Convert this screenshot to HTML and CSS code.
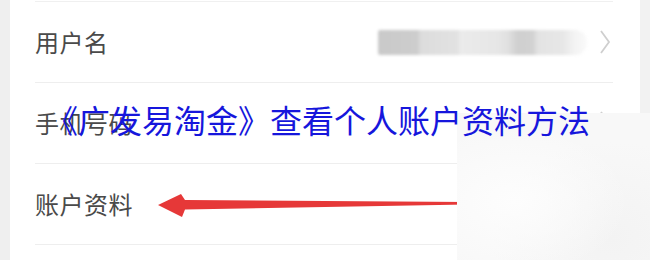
FILE: index.html
```html
<!DOCTYPE html>
<html lang="zh-CN">
<head>
<meta charset="utf-8">
<link rel="stylesheet" href="styles.css">
</head>
<body>
<div class="screen">
  <div class="edge edge-left"></div>
  <div class="main">
    <ul class="list">
      <li class="row">
        <span class="label">用户名</span>
        <span class="value masked"></span>
        <svg class="chev" viewBox="0 0 12 26" width="12" height="26"><polyline points="2,2 10,13 2,24" fill="none" stroke="#cfcfcf" stroke-width="1.8"/></svg>
      </li>
      <li class="row">
        <span class="label">手机号码</span>
        <span class="value"></span>
        <svg class="chev" viewBox="0 0 12 26" width="12" height="26"><polyline points="2,2 10,13 2,24" fill="none" stroke="#cfcfcf" stroke-width="1.8"/></svg>
      </li>
      <li class="row">
        <span class="label">账户资料</span>
      </li>
    </ul>
  </div>
  <div class="edge edge-right"></div>

  <svg class="arrow" viewBox="0 0 320 40" width="320" height="40">
    <polygon points="8,20 31,9 35,15 317,17 317,19.5 35,24.5 32,32" fill="#e63838"/>
  </svg>
  <div class="patch"></div>
  <h1 class="title">《广发易淘金》查看个人账户资料方法</h1>
</div>
</body>
</html>
```

FILE: styles.css
```css
* { box-sizing: border-box; }
html, body { margin: 0; padding: 0; }
body {
  width: 650px;
  height: 260px;
  overflow: hidden;
  background: #ffffff;
  font-family: "Noto Sans CJK SC", "Noto Sans", sans-serif;
}
.screen {
  position: relative;
  display: flex;
  width: 650px;
  height: 260px;
}
.edge { width: 10px; flex: none; }
.edge-left { background: #efefef; }
.edge-right { background: #f2f2f2; }
.main { flex: 1; background: #ffffff; }
.list {
  list-style: none;
  margin: 1px 27px 0 25px;
  padding: 0;
  border-top: 1px solid #f0f0f0;
}
.row {
  display: flex;
  align-items: center;
  height: 81px;
  padding-right: 2px;
  border-bottom: 1px solid #eeeeee;
}
.label {
  font-size: 24px;
  color: #4a4a4a;
  letter-spacing: 0.5px;
  line-height: 1;
}
.value {
  margin-left: auto;
  width: 209px;
  height: 25px;
}
.masked {
  border-radius: 2px 12px 12px 2px;
  background: linear-gradient(90deg,
    #c9c9c9 0, #cdcdcd 40px,
    #dcdcdc 42px, #e2e2e2 80px,
    #ebebeb 82px, #e6e6e6 120px,
    #e0e0e0 130px, #cfcfcf 140px, #d2d2d2 155px,
    #e3e3e3 160px, #e7e7e7 185px,
    #f2f2f2 195px, #fafafa 209px);
  filter: blur(1.5px);
}
.chev { margin-left: 12px; flex: none; }
.arrow {
  position: absolute;
  left: 150px;
  top: 185px;
}
.patch {
  position: absolute;
  left: 457px;
  top: 113px;
  width: 193px;
  height: 147px;
  background:
    radial-gradient(ellipse at 30% 60%, #fdfdfd 0, rgba(253,253,253,0) 60%),
    radial-gradient(ellipse at 80% 85%, #f3f3f3 0, rgba(243,243,243,0) 55%),
    #f8f8f8;
}
.title {
  position: absolute;
  left: 46px;
  top: 103px;
  margin: 0;
  font-size: 32px;
  line-height: 32px;
  font-weight: 400;
  color: #1616dc;
  white-space: nowrap;
}
```
